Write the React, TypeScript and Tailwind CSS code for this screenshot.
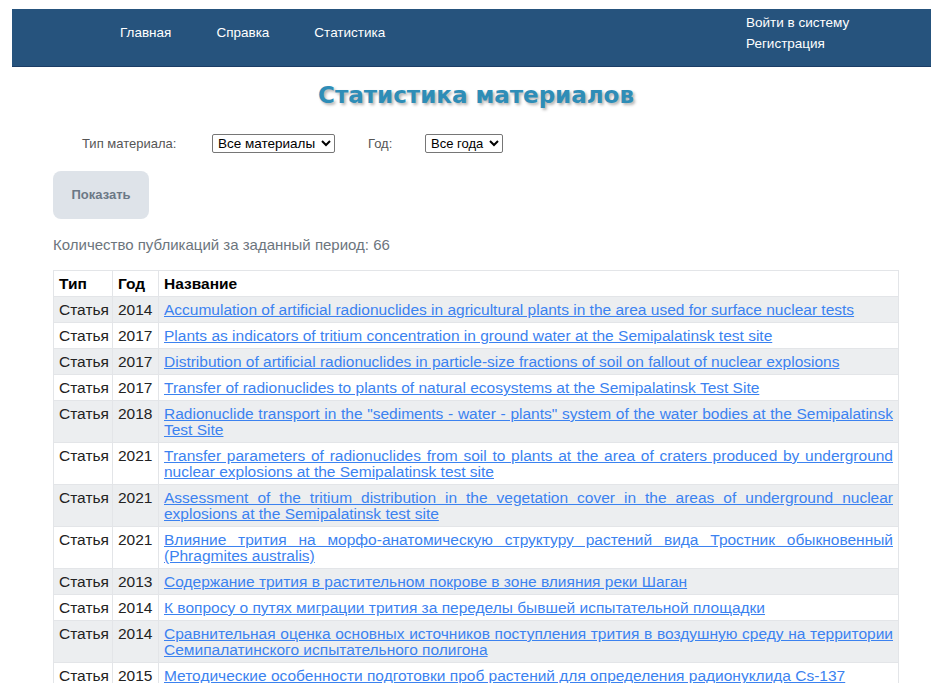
import React from 'react';

interface Publication {
    type: string;
    year: number;
    title: string;
}

const publications: Publication[] = [
    { type: 'Статья', year: 2014, title: 'Accumulation of artificial radionuclides in agricultural plants in the area used for surface nuclear tests' },
    { type: 'Статья', year: 2017, title: 'Plants as indicators of tritium concentration in ground water at the Semipalatinsk test site' },
    { type: 'Статья', year: 2017, title: 'Distribution of artificial radionuclides in particle-size fractions of soil on fallout of nuclear explosions' },
    { type: 'Статья', year: 2017, title: 'Transfer of radionuclides to plants of natural ecosystems at the Semipalatinsk Test Site' },
    { type: 'Статья', year: 2018, title: 'Radionuclide transport in the "sediments - water - plants" system of the water bodies at the Semipalatinsk Test Site' },
    { type: 'Статья', year: 2021, title: 'Transfer parameters of radionuclides from soil to plants at the area of craters produced by underground nuclear explosions at the Semipalatinsk test site' },
    { type: 'Статья', year: 2021, title: 'Assessment of the tritium distribution in the vegetation cover in the areas of underground nuclear explosions at the Semipalatinsk test site' },
    { type: 'Статья', year: 2021, title: 'Влияние трития на морфо-анатомическую структуру растений вида Тростник обыкновенный (Phragmites australis)' },
    { type: 'Статья', year: 2013, title: 'Содержание трития в растительном покрове в зоне влияния реки Шаган' },
    { type: 'Статья', year: 2014, title: 'К вопросу о путях миграции трития за переделы бывшей испытательной площадки' },
    { type: 'Статья', year: 2014, title: 'Сравнительная оценка основных источников поступления трития в воздушную среду на территории Семипалатинского испытательного полигона' },
    { type: 'Статья', year: 2015, title: 'Методические особенности подготовки проб растений для определения радионуклида Cs-137' },
    { type: 'Статья', year: 2015, title: 'Определение содержания трития в растениях на территории Семипалатинского испытательного полигона' },
    { type: 'Статья', year: 2016, title: 'Особенности накопления радионуклидов растениями в местах проведения ядерных испытаний' },
];

export default function App() {
    return (
        <div className="min-h-screen bg-white pt-[9px] font-['Liberation_Sans',Arial,sans-serif]">
            <header className="ml-[12px] flex h-[58px] items-start justify-between border-b border-[#1b3d66] bg-[#26537d] text-white">
                <nav className="flex gap-[45px] pl-[108px] pt-[16px] text-[13.5px] leading-[16px]">
                    <a href="#">Главная</a>
                    <a href="#">Справка</a>
                    <a href="#">Статистика</a>
                </nav>
                <div className="flex w-[185px] flex-col gap-[5px] pt-[6px] text-[13.5px] leading-[16px]">
                    <a href="#">Войти в систему</a>
                    <a href="#">Регистрация</a>
                </div>
            </header>

            <main className="ml-[53px] w-[846px]">
                <h1 className="mt-[14px] text-center font-['DejaVu_Sans',sans-serif] text-[23px] font-bold leading-[28px] text-[#2e8db7] [text-shadow:2px_2px_3px_rgba(0,0,0,0.3)]">
                    Статистика материалов
                </h1>

                <div className="mt-[25px] flex items-center text-[13px] text-[#555]">
                    <label className="ml-[29px] w-[130px]">Тип материала:</label>
                    <select className="h-[19px] w-[123px] rounded-[2px] border border-[#767676] px-[1px] text-[13.5px] leading-[15px] text-black">
                        <option>Все материалы</option>
                    </select>
                    <label className="ml-[33px] w-[57px]">Год:</label>
                    <select className="h-[19px] w-[78px] rounded-[2px] border border-[#767676] px-[1px] text-[13px] leading-[15px] text-black">
                        <option>Все года</option>
                    </select>
                </div>

                <button className="mt-[17px] h-[48px] w-[96px] rounded-[8px] bg-[#dee3e9] pt-[1px] text-[13px] font-bold text-[#6c7886]">
                    Показать
                </button>

                <p className="mt-[15px] text-[15px] text-[#6c757d]">Количество публикаций за заданный период: 66</p>

                <table className="mt-[14px] w-full table-fixed border-collapse border border-[#e3e5e8] text-[15.5px] leading-[16px] text-[#222]">
                    <colgroup>
                        <col className="w-[59px]" />
                        <col className="w-[46px]" />
                        <col />
                    </colgroup>
                    <thead>
                        <tr className="bg-white text-left">
                            <th className="border border-[#e3e5e8] px-[5px] pt-[5px] pb-[4px] font-bold text-black">Тип</th>
                            <th className="border border-[#e3e5e8] px-[5px] pt-[5px] pb-[4px] font-bold text-black">Год</th>
                            <th className="border border-[#e3e5e8] px-[5px] pt-[5px] pb-[4px] font-bold text-black">Название</th>
                        </tr>
                    </thead>
                    <tbody>
                        {publications.map((p, i) => (
                            <tr key={i} className={i % 2 === 0 ? 'bg-[#eceef0]' : 'bg-white'}>
                                <td className="border border-[#e3e5e8] px-[5px] pt-[5px] pb-[4px] align-top">{p.type}</td>
                                <td className="border border-[#e3e5e8] px-[5px] pt-[5px] pb-[4px] align-top">{p.year}</td>
                                <td className="border border-[#e3e5e8] px-[5px] pt-[5px] pb-[4px] text-justify align-top">
                                    <a href="#" className="text-[#3b82f0] underline">{p.title}</a>
                                </td>
                            </tr>
                        ))}
                    </tbody>
                </table>
            </main>
        </div>
    );
}
